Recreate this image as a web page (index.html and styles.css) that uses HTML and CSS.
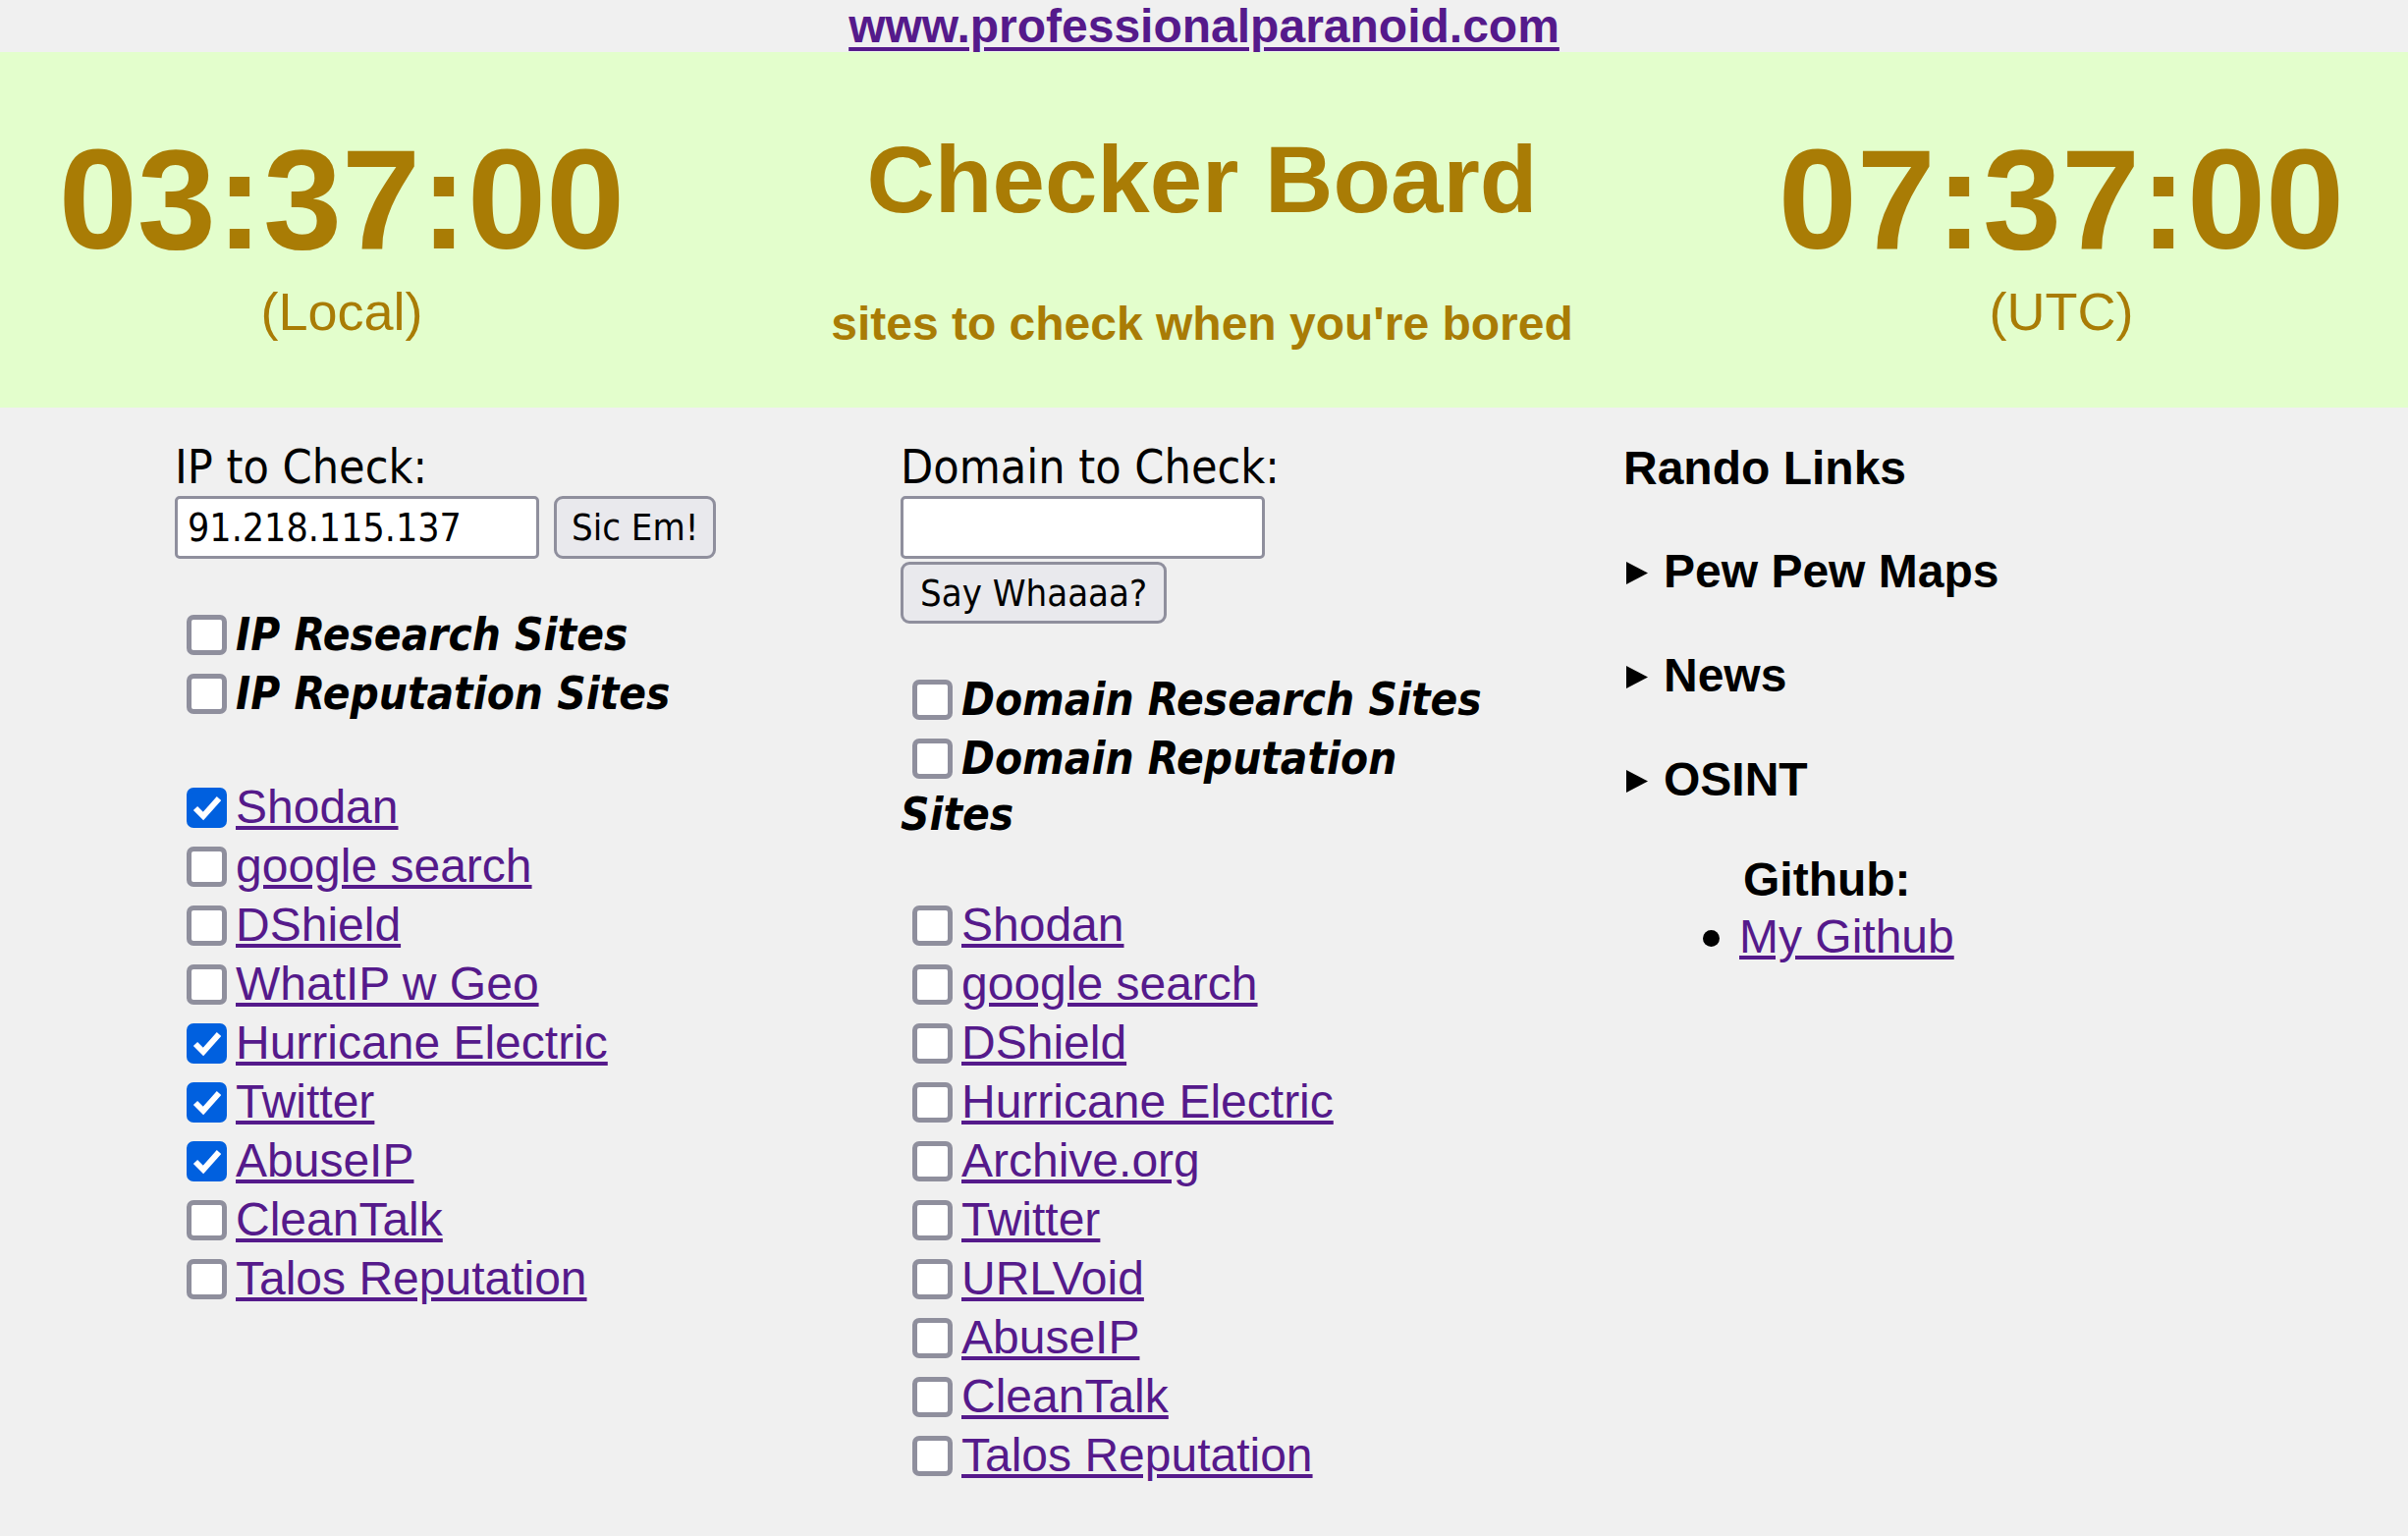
FILE: index.html
```html
<!DOCTYPE html>
<html lang="en">
<head>
<meta charset="utf-8">
<title>Checker Board</title>
<link rel="stylesheet" href="styles.css">
</head>
<body>
<div class="topbar"><a class="site-link" href="#">www.professionalparanoid.com</a></div>

<header class="hero">
  <div class="clock-col">
    <div class="clock">03:37:00</div>
    <div class="zone">(Local)</div>
  </div>
  <div class="title-col">
    <h1 class="title">Checker Board</h1>
    <p class="tagline">sites to check when you're bored</p>
  </div>
  <div class="clock-col">
    <div class="clock">07:37:00</div>
    <div class="zone">(UTC)</div>
  </div>
</header>

<main class="board">
  <section class="col">
    <div class="field-label">IP to Check:</div>
    <div class="form-row">
      <input class="text-input" type="text" value="91.218.115.137">
      <button class="btn" type="button">Sic Em!</button>
    </div>
    <div class="groups">
      <div class="group-line"><span class="cb"></span><b class="group-name">IP Research Sites</b></div>
      <div class="group-line"><span class="cb"></span><b class="group-name">IP Reputation Sites</b></div>
    </div>
    <ul class="site-list">
      <li><span class="cb is-checked"><svg viewBox="0 0 31 31" width="31" height="31"><polyline points="4,16 12,24 28,6"/></svg></span><a href="#">Shodan</a></li>
      <li><span class="cb"></span><a href="#">google search</a></li>
      <li><span class="cb"></span><a href="#">DShield</a></li>
      <li><span class="cb"></span><a href="#">WhatIP w Geo</a></li>
      <li><span class="cb is-checked"><svg viewBox="0 0 31 31" width="31" height="31"><polyline points="4,16 12,24 28,6"/></svg></span><a href="#">Hurricane Electric</a></li>
      <li><span class="cb is-checked"><svg viewBox="0 0 31 31" width="31" height="31"><polyline points="4,16 12,24 28,6"/></svg></span><a href="#">Twitter</a></li>
      <li><span class="cb is-checked"><svg viewBox="0 0 31 31" width="31" height="31"><polyline points="4,16 12,24 28,6"/></svg></span><a href="#">AbuseIP</a></li>
      <li><span class="cb"></span><a href="#">CleanTalk</a></li>
      <li><span class="cb"></span><a href="#">Talos Reputation</a></li>
    </ul>
  </section>

  <section class="col">
    <div class="field-label">Domain to Check:</div>
    <div class="form-stack">
      <input class="text-input" type="text" value="">
      <button class="btn btn-tall" type="button">Say Whaaaa?</button>
    </div>
    <div class="groups groups-narrow">
      <div class="group-line"><span class="cb"></span><b class="group-name">Domain Research Sites</b></div>
      <div class="group-line"><span class="cb"></span><b class="group-name">Domain Reputation Sites</b></div>
    </div>
    <ul class="site-list site-list-mid">
      <li><span class="cb"></span><a href="#">Shodan</a></li>
      <li><span class="cb"></span><a href="#">google search</a></li>
      <li><span class="cb"></span><a href="#">DShield</a></li>
      <li><span class="cb"></span><a href="#">Hurricane Electric</a></li>
      <li><span class="cb"></span><a href="#">Archive.org</a></li>
      <li><span class="cb"></span><a href="#">Twitter</a></li>
      <li><span class="cb"></span><a href="#">URLVoid</a></li>
      <li><span class="cb"></span><a href="#">AbuseIP</a></li>
      <li><span class="cb"></span><a href="#">CleanTalk</a></li>
      <li><span class="cb"></span><a href="#">Talos Reputation</a></li>
    </ul>
  </section>

  <section class="col">
    <h2 class="links-title">Rando Links</h2>
    <details class="rando"><summary><svg class="tri" viewBox="0 0 22 23" width="22" height="23"><polygon points="0,0 22,11.5 0,23"/></svg>Pew Pew Maps</summary></details>
    <details class="rando"><summary><svg class="tri" viewBox="0 0 22 23" width="22" height="23"><polygon points="0,0 22,11.5 0,23"/></svg>News</summary></details>
    <details class="rando"><summary><svg class="tri" viewBox="0 0 22 23" width="22" height="23"><polygon points="0,0 22,11.5 0,23"/></svg>OSINT</summary></details>
    <h3 class="gh-title">Github:</h3>
    <ul class="gh-list">
      <li><span class="dot"></span><a href="#">My Github</a></li>
    </ul>
  </section>
</main>
</body>
</html>
```

FILE: styles.css
```css
html, body {
  margin: 0;
  padding: 0;
}

body {
  background: #f0f0f0;
  color: #000;
  font-family: "Liberation Sans", Arial, sans-serif;
}

a {
  color: #551a8b;
}

/* top link */
.topbar {
  height: 53px;
  text-align: center;
  line-height: 53px;
  font-size: 48px;
  font-weight: 700;
}

.site-link {
  text-decoration-thickness: 4px;
  text-underline-offset: 5px;
}

/* green header */
.hero {
  box-sizing: border-box;
  height: 362px;
  background: #e3fecc;
  padding-left: 12px;
  display: grid;
  grid-template-columns: 672px 1080px 670px;
  align-items: start;
  color: #a97c05;
  text-align: center;
}

.clock-col {
  padding-top: 79px;
}

.clock {
  font-size: 144px;
  line-height: 144px;
  font-weight: 700;
}

.zone {
  margin-top: 11px;
  font-size: 54px;
  line-height: 60px;
}

.title-col {
  padding-top: 82px;
}

.title {
  margin: 0;
  font-size: 96px;
  line-height: 96px;
  font-weight: 700;
}

.tagline {
  margin: 71px 0 0;
  font-size: 48px;
  line-height: 56px;
  font-weight: 700;
}

/* lower board */
.board {
  display: grid;
  grid-template-columns: 739px 736px 1fr;
  padding: 30px 0 0 178px;
  align-items: start;
}

.col {
  min-width: 0;
}

.field-label {
  font-family: "DejaVu Sans Condensed", "DejaVu Sans", sans-serif;
  font-stretch: condensed;
  font-size: 48px;
  line-height: 60px;
}

.form-row {
  display: flex;
  gap: 15px;
  align-items: flex-start;
}

.form-stack {
  display: flex;
  flex-direction: column;
  align-items: flex-start;
  gap: 3px;
}

.text-input {
  box-sizing: border-box;
  width: 371px;
  height: 64px;
  margin: 0;
  padding: 0 10px;
  border: 3px solid #8f8f9d;
  border-radius: 5px;
  background: #fff;
  color: #000;
  font-family: "DejaVu Sans Condensed", "DejaVu Sans", sans-serif;
  font-stretch: condensed;
  font-size: 39px;
  outline: none;
}

.btn {
  box-sizing: border-box;
  height: 64px;
  margin: 0;
  padding: 0 15px;
  border: 3px solid #8f8f9d;
  border-radius: 9px;
  background: #e9e9ed;
  color: #000;
  font-family: "DejaVu Sans Condensed", "DejaVu Sans", sans-serif;
  font-stretch: condensed;
  font-size: 38px;
}

.btn-tall {
  height: 63px;
  padding: 0 17px;
}

.groups {
  margin-top: 46px;
}

.groups-narrow {
  max-width: 620px;
}

.group-line {
  font-family: "DejaVu Sans Condensed", "DejaVu Sans", sans-serif;
  font-stretch: condensed;
  font-size: 45.5px;
  line-height: 57px;
}

.group-line .cb {
  margin-top: 11px;
}

.group-name {
  font-weight: 700;
  font-style: italic;
}

/* checkbox look */
.cb {
  display: inline-block;
  box-sizing: border-box;
  width: 41px;
  height: 41px;
  margin: 13px 9px 0 12px;
  border: 5px solid #8f8f9d;
  border-radius: 7px;
  background: #fff;
  vertical-align: -5px;
  overflow: hidden;
}

.cb.is-checked {
  background: #0060df;
  border-color: #0060df;
}

.cb svg {
  display: block;
  fill: none;
  stroke: #fff;
  stroke-width: 6;
}

.site-list {
  list-style: none;
  margin: 54px 0 0;
  padding: 0;
  font-size: 48px;
}

.site-list-mid {
  margin-top: 51px;
}

.site-list li {
  line-height: normal;
}

/* right column */
.links-title {
  margin: 0;
  font-size: 48px;
  line-height: 64px;
  font-weight: 700;
}

.rando {
  margin-top: 43px;
  font-size: 48px;
  font-weight: 700;
  line-height: 60px;
}

.rando + .rando {
  margin-top: 46px;
}

.rando summary {
  list-style: none;
  cursor: default;
}

.rando summary::-webkit-details-marker {
  display: none;
}

.tri {
  fill: #000;
  vertical-align: 3px;
  margin: 0 16px 0 3px;
}

.gh-title {
  margin: 44px 0 0;
  padding-left: 122px;
  font-size: 48px;
  line-height: 56px;
  font-weight: 700;
}

.gh-list {
  list-style: none;
  margin: 0;
  padding: 0 0 0 81px;
  font-size: 48px;
  line-height: 60px;
}

.dot {
  display: inline-block;
  width: 17px;
  height: 17px;
  border-radius: 50%;
  background: #000;
  margin-right: 20px;
  vertical-align: 6px;
}
```
